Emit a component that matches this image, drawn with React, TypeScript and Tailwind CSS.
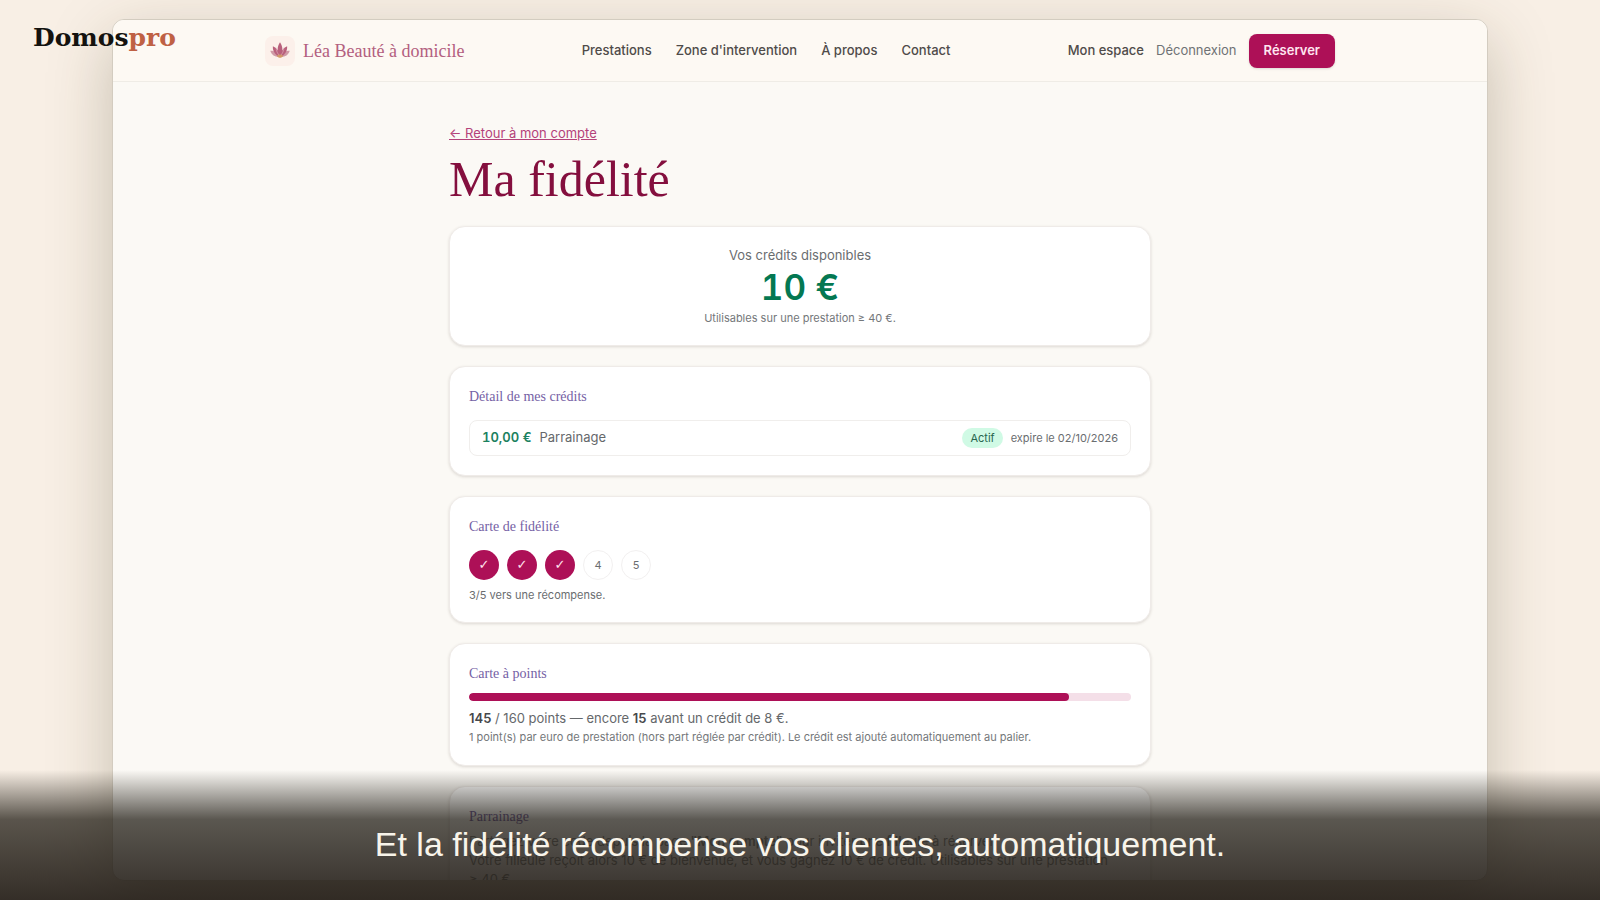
import type { ReactNode } from "react";

const navLinks = ["Prestations", "Zone d'intervention", "À propos", "Contact"];
const stamps = [1, 2, 3, 4, 5];
const earnedStamps = 3;
const points = 145;
const pointsGoal = 160;

function LotusLogo() {
  return (
    <span className="flex size-[30px] items-center justify-center rounded-lg bg-[#fcf0ea]">
      <svg viewBox="0 0 24 24" className="size-[22px]" aria-hidden="true">
        <g fill="#cf9aa6">
          <path d="M12 18.5C7 19 3 17 1.4 11.800c3.800-.2 8 1.800 10.600 6.700z" />
          <path d="M12 18.500c5 .5 9-1.500 10.600-6.700-3.800-.2-8 1.800-10.600 6.700z" />
        </g>
        <g fill="#b9607c">
          <path d="M12 18.500C7.300 17 3.800 12.500 4.200 6.800c4.200 1.600 7.200 5.800 7.800 11.700z" />
          <path d="M12 18.500c4.700-1.500 8.200-6 7.800-11.700-4.200 1.600-7.200 5.800-7.800 11.700z" />
          <path d="M12 18.500C8.600 14 8.600 7 12 2.500c3.400 4.500 3.400 11.500 0 16z" />
        </g>
        <g fill="none" stroke="#f0cdd2" strokeWidth="0.5">
          <path d="M12 18C9.400 14.800 7.600 11.800 7.900 8" />
          <path d="M12 18c2.600-3.200 4.400-6.200 4.100-10" />
        </g>
        <path d="M8.500 17.500c1.500-2.400 5.500-2.400 7 0-1.500 2.600-5.500 2.600-7 0z" fill="#d19a68" />
      </svg>
    </span>
  );
}

function Card({ title, children }: { title?: string; children: ReactNode }) {
  return (
    <section className="rounded-2xl border border-[#efebe8] bg-white p-[19px] shadow-[0_1px_3px_rgba(60,50,40,0.16)]">
      {title && (
        <h2 className="font-['Liberation_Serif',serif] text-sm leading-[22px] text-[#7561a5]">{title}</h2>
      )}
      {children}
    </section>
  );
}

function Header() {
  return (
    <header className="border-b border-[#efece6] bg-[#fdf9f3]">
      <div className="mx-auto flex h-[61px] max-w-[1070px] items-center justify-between">
        <a href="#accueil" className="flex items-center gap-2 text-[#b3607f]">
          <LotusLogo />
          <span className="font-['Liberation_Serif',serif] text-lg">Léa Beauté à domicile</span>
        </a>
        <nav className="flex gap-6 text-[13px] font-medium text-[#4f4b49]">
          {navLinks.map((label) => (
            <a key={label} href="#section">
              {label}
            </a>
          ))}
        </nav>
        <div className="flex items-center gap-3 text-[13px]">
          <a href="#espace" className="font-medium text-[#4f4b49]">
            Mon espace
          </a>
          <button type="button" className="text-[#6f7275]">
            Déconnexion
          </button>
          <button
            type="button"
            className="h-[34px] rounded-lg bg-[#ad1057] px-[15px] font-semibold text-[#ffe6f0] shadow-sm"
          >
            Réserver
          </button>
        </div>
      </div>
    </header>
  );
}

function Loyalty() {
  return (
    <main className="mx-auto max-w-[702px] pt-[41px]">
      <a href="#compte" className="block text-[13px] leading-5 text-[#b4427a] underline">
        ← Retour à mon compte
      </a>
      <h1 className="mb-[11px] font-['Liberation_Serif',serif] text-[50px] leading-[72px] text-[#840f3e]">
        Ma fidélité
      </h1>
      <div className="flex flex-col gap-5">
        <Card>
          <div className="text-center">
            <p className="text-[13px] leading-[18px] text-[#6a6d70]">Vos crédits disponibles</p>
            <p className="text-[35px] leading-[46px] font-semibold text-[#047852] tabular-nums">10 €</p>
            <p className="text-[11px] leading-4 text-[#74777a]">Utilisables sur une prestation ≥ 40 €.</p>
          </div>
        </Card>

        <Card title="Détail de mes crédits">
          <ul className="mt-3">
            <li className="flex h-9 items-center justify-between rounded-lg border border-[#f0eeec] px-3 text-[13px]">
              <span className="flex gap-2 text-[#65686b]">
                <strong className="font-semibold text-[#1b8160] tabular-nums">10,00 €</strong>
                Parrainage
              </span>
              <span className="flex items-center gap-2 text-[11px] text-[#6a6d70]">
                <span className="rounded-full bg-[#d0fae5] px-2 leading-5 text-[#28664f]">Actif</span>
                expire le 02/10/2026
              </span>
            </li>
          </ul>
        </Card>

        <Card title="Carte de fidélité">
          <ol className="mt-3 flex gap-2 text-[11px]">
            {stamps.map((n) =>
              n <= earnedStamps ? (
                <li
                  key={n}
                  className="flex size-[30px] items-center justify-center rounded-full bg-[#ad1057] font-['DejaVu_Sans',sans-serif] text-[13px] text-[#ffe3ee]"
                >
                  ✓
                </li>
              ) : (
                <li
                  key={n}
                  className="flex size-[30px] items-center justify-center rounded-full border border-[#f2f0f0] text-[#6a6d70]"
                >
                  {n}
                </li>
              ),
            )}
          </ol>
          <p className="mt-[7px] text-[11px] leading-4 text-[#6a6d70]">3/5 vers une récompense.</p>
        </Card>

        <Card title="Carte à points">
          <div className="mt-2 h-2 overflow-hidden rounded-full bg-[#f4dfe8]">
            <div
              className="h-full rounded-full bg-[#ad1057]"
              style={{ width: `${(points / pointsGoal) * 100}%` }}
            />
          </div>
          <p className="mt-[7px] text-[13px] leading-5 text-[#65686b]">
            <strong className="font-semibold text-[#46484b]">{points}</strong> / {pointsGoal} points — encore{" "}
            <strong className="font-semibold text-[#46484b]">{pointsGoal - points}</strong> avant un crédit de 8 €.
          </p>
          <p className="text-[11px] leading-[18px] text-[#74777a]">
            1 point(s) par euro de prestation (hors part réglée par crédit). Le crédit est ajouté automatiquement au
            palier.
          </p>
        </Card>

        <Card title="Parrainage">
          <p className="mt-1 text-[13px] leading-[19px] text-[#8b8e90]">
            Partagez votre code depuis la page <strong className="font-semibold">"Mon compte"</strong> pour inviter{" "}
            <strong className="font-semibold">une filleule</strong> à réserver.
            <br />
            Votre filleule reçoit alors 10 € de bienvenue, et vous gagnez 10 € de crédit. Utilisables sur une prestation
            <br />≥ 40 €.
          </p>
        </Card>
      </div>
    </main>
  );
}

export default function App() {
  return (
    <div className="relative flex h-screen flex-col overflow-hidden bg-[#f8efe5] px-[7%] py-[19px] font-['Inter',sans-serif]">
      <div className="min-h-0 flex-1 overflow-hidden rounded-xl border border-[#d3ccc0] bg-[#fbf9f5] shadow-[0_20px_64px_rgba(60,55,25,0.26)]">
        <Header />
        <Loyalty />
      </div>

      <div className="absolute top-5 left-[33px] font-['DejaVu_Serif',serif] text-[25px] leading-9 font-bold text-[#14120f]">
        Domos<span className="text-[#bf6144]">pro</span>
      </div>

      <div className="absolute inset-x-0 bottom-0 flex h-[130px] items-end justify-center bg-linear-to-b from-[#1c1810]/0 via-[#1c1810]/72 via-38% to-[#1c1610]/89 pb-9">
        <p className="font-['Liberation_Sans',sans-serif] text-[34px] leading-10 text-[#f8f4ea]">
          Et la fidélité récompense vos clientes, automatiquement.
        </p>
      </div>
    </div>
  );
}
